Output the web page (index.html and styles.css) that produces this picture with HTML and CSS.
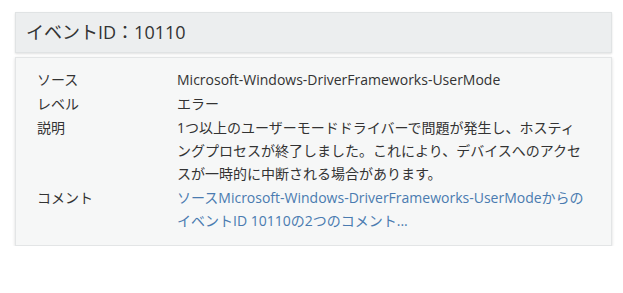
FILE: index.html
```html
<!DOCTYPE html>
<html lang="ja">

<head>
    <meta charset="UTF-8">
    <title>イベントID：10110</title>
    <link rel="stylesheet" href="styles.css">
</head>

<body>
    <div class="event-card">
        <div class="event-header">イベントID：10110</div>
        <div class="event-body">
            <div class="event-row">
                <div class="event-label">ソース</div>
                <div class="event-value">Microsoft-Windows-DriverFrameworks-UserMode</div>
            </div>
            <div class="event-row">
                <div class="event-label">レベル</div>
                <div class="event-value">エラー</div>
            </div>
            <div class="event-row">
                <div class="event-label">説明</div>
                <div class="event-value">1つ以上のユーザーモードドライバーで問題が発生し、ホスティングプロセスが終了しました。これにより、デバイスへのアクセスが一時的に中断される場合があります。</div>
            </div>
            <div class="event-row">
                <div class="event-label">コメント</div>
                <div class="event-value"><a href="#">ソースMicrosoft-Windows-DriverFrameworks-UserModeからのイベントID 10110の2つのコメント...</a></div>
            </div>
        </div>
    </div>
</body>

</html>
```

FILE: styles.css
```css
body {
    font-family: 'Open Sans', 'Noto Sans CJK JP', sans-serif;
    margin: 0;
    padding: 12px 11px 0 15px;
    background: #fff;
    color: #333;
}

.event-card {
    width: 597px;
}

.event-header {
    height: 39px;
    line-height: 39px;
    padding-left: 10px;
    font-size: 18px;
    background: #eceeef;
    border: 1px solid #e0e3e4;
    box-shadow: 0 1px 2px rgba(0, 0, 0, 0.12);
}

.event-body {
    margin-top: 4px;
    padding: 10px 24px 13px 21px;
    background: #f6f7f7;
    border: 1px solid #e3e5e6;
    box-shadow: 0 1px 3px rgba(0, 0, 0, 0.15);
}

.event-row {
    display: flex;
    font-size: 14px;
    line-height: 23px;
    margin-bottom: 1px;
}

.event-row:last-child {
    margin-bottom: 0;
}

.event-label {
    width: 140px;
    flex-shrink: 0;
}

.event-value {
    flex: 1;
}

.event-value a {
    color: #4a7bb0;
    text-decoration: none;
}
```
